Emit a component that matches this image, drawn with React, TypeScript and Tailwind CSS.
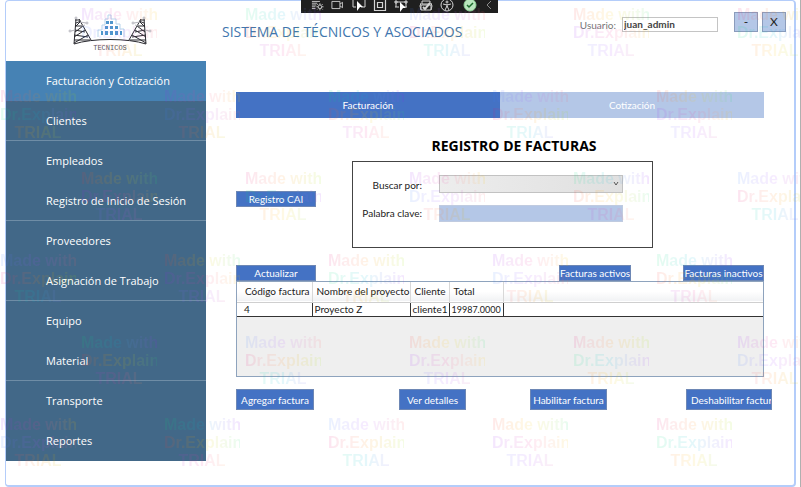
import { useState } from "react";
import type { ReactNode } from "react";

const menu = [
  "Facturación y Cotización",
  "Clientes",
  "Empleados",
  "Registro de Inicio de Sesión",
  "Proveedores",
  "Asignación de Trabajo",
  "Equipo",
  "Material",
  "Transporte",
  "Reportes",
];

const invoices = [
  { code: "4", project: "Proyecto Z", client: "cliente1", total: "19987.0000" },
];

const tints = [
  "from-purple-600 via-pink-500 to-yellow-400",
  "from-blue-500 via-purple-500 to-red-400",
  "from-pink-600 via-orange-400 to-lime-400",
  "from-green-400 via-cyan-500 to-purple-600",
  "from-red-500 via-yellow-400 to-green-400",
];

const markLines = ["Made with", "Dr.Explain", "TRIAL"];

function TrialMarks() {
  return (
    <div aria-hidden="true" className="pointer-events-none absolute inset-0 z-20 overflow-hidden opacity-10">
      {[0, 1, 2, 3, 4, 5].map((row) => (
        <div key={row} className={`flex h-[82px] pt-[6px] ${row % 2 === 0 ? "pl-[81px]" : "pl-0"}`}>
          {[0, 1, 2, 3, 4].map((col) => (
            <div
              key={col}
              className="w-[164px] shrink-0 font-['Liberation_Sans',Arial,sans-serif] text-base leading-[18px] font-bold"
            >
              <div className="w-[76px] text-center whitespace-nowrap">
                {markLines.map((line, i) => (
                  <div
                    key={line}
                    className={`bg-linear-to-r bg-clip-text text-transparent ${tints[(row * 2 + col * 3 + i) % 5]}`}
                  >
                    {line}
                  </div>
                ))}
              </div>
            </div>
          ))}
        </div>
      ))}
    </div>
  );
}

function Logo() {
  return (
    <svg viewBox="0 0 84 38" className="h-[38px] w-[84px]" fill="none" role="img" aria-label="Técnicos">
      <g stroke="#2a2a30" strokeWidth="1">
        <path d="M8 6 L6 31 M11 6 L23 27 M7 7 H12 M8 10 L13 8 M7 14 L12 9 M7 13 L15 13 M7 19 L15 13 M7 17 L17 19 M6 24 L17 17 M6 22 L20 24 M6 30 L20 22 M6 27 L22 27" />
        <path d="M76 6 L78 31 M73 6 L61 27 M77 7 H72 M76 10 L71 8 M77 14 L72 9 M77 13 L69 13 M77 19 L69 13 M77 17 L67 19 M78 24 L67 17 M78 22 L64 24 M78 30 L64 22 M78 27 L62 27" />
        <path d="M6 31 C24 25 60 25 78 31" />
      </g>
      <g stroke="#b4b4bb" strokeWidth="1">
        <path d="M12 9 L18 10 M3 18 L7 17 M14 13 L17 12 M72 9 L66 10 M81 18 L77 17 M70 13 L67 12" />
        <circle cx="2" cy="18" r="1" />
        <circle cx="19" cy="10" r="1" />
        <circle cx="82" cy="18" r="1" />
        <circle cx="65" cy="10" r="1" />
        <circle cx="8" cy="5" r="1" />
        <circle cx="76" cy="5" r="1" />
      </g>
      <path
        d="M30 24 V17 H34 V12 H37 V6 H40 V2 H43 V6 H46 V6 H48 V11 H52 V16 H56 V24"
        stroke="#b5d4ec"
        strokeWidth="1"
      />
      <g fill="#4f96cc">
        <path d="M38 8h3v3h-3z M42 8h3v3h-3z M37 13h3v3h-3z M42 13h3v3h-3z M47 13h3v3h-3z M33 18h2v4h-2z M37 18h3v4h-3z M42 18h3v4h-3z M47 18h3v4h-3z M52 18h2v4h-2z" />
      </g>
      <text x="42" y="37" textAnchor="middle" fill="#55555e" className="font-['Liberation_Mono',monospace] text-[7px]">
        TECNICOS
      </text>
    </svg>
  );
}

function ToolIcon({ children }: { children: ReactNode }) {
  return (
    <svg viewBox="0 0 14 14" className="size-[14px]" fill="none" stroke="#d4d4d4" strokeWidth="1">
      {children}
    </svg>
  );
}

function DebugBar() {
  return (
    <div className="absolute top-0 left-[301px] z-10 h-[13px] w-[197px] overflow-hidden bg-[#1f1f1f]">
      <div className="-mt-[2px] flex items-center gap-[7px] pl-[10px]">
        <ToolIcon>
          <path d="M1 3h9M1 5h6M1 7h5M1 9h4M1 11h4" />
          <circle cx="10" cy="9" r="2" />
          <path d="M10 5v2M10 11v2M6 9h2M12 9h2M7 6l1 1M12 11l1 1M13 6l-1 1M8 11l-1 1" />
        </ToolIcon>
        <ToolIcon>
          <path d="M1 3h9v8h-9z M10 6l3-2v6l-3-2" />
        </ToolIcon>
        <span className="ml-[2px] flex gap-[7px]">
          <ToolIcon>
            <path d="M1 2v7h3M9 9h4V2" />
            <path d="M5 3l6 6H8l-3 4z" fill="#fff" stroke="none" />
          </ToolIcon>
          <ToolIcon>
            <path d="M1.500 1.500h11v11h-11z M4.500 4.500h5v5h-5z" strokeWidth="1.200" />
          </ToolIcon>
          <ToolIcon>
            <path d="M1 4h12M1 9h4M10 9h3M1 3h2v2H1z M11 3h2v2h-2z M2 5v4M12 5v4" />
            <path d="M6 4l6 6H9l-3 4z" fill="#fff" stroke="none" />
          </ToolIcon>
        </span>
        <span className="ml-[4px] flex gap-[7px]">
          <ToolIcon>
            <path d="M3 3h8v3H3z M2 7h10v5H2z M2 5l-1 3 1 4M12 5l1 3-1 4" />
            <path d="M4 9l2 2 5-6" strokeWidth="2" />
          </ToolIcon>
          <ToolIcon>
            <circle cx="7" cy="7" r="6" />
            <circle cx="7" cy="4" r="1" />
            <path d="M3 6l4 1 4-1M7 6v3M7 8l-2 4M7 8l2 4" />
          </ToolIcon>
          <span className="ml-[2px]">
            <ToolIcon>
              <circle cx="7" cy="7" r="6" fill="#b9e6bd" stroke="#8fd096" />
              <path d="M4 7l2 2 4-4" stroke="#1c6b2c" strokeWidth="1.500" />
            </ToolIcon>
          </span>
          <ToolIcon>
            <path d="M7 3L3 7l4 4" stroke="#8a8a8a" />
          </ToolIcon>
        </span>
      </div>
    </div>
  );
}

function BlueButton({ className, children }: { className: string; children: ReactNode }) {
  return (
    <button
      type="button"
      className={`overflow-hidden border border-[#6d87b5] bg-[#4472c4] text-[10px] leading-[14px] whitespace-nowrap text-white ${className}`}
    >
      {children}
    </button>
  );
}

export default function App() {
  const [active, setActive] = useState(0);

  return (
    <div className="relative min-h-screen overflow-hidden border-r border-[#b0b0b0] bg-white pr-1 pl-[5px] font-[Lato,'Open_Sans',sans-serif] text-[10px] text-[#222]">
      <div className="flex min-h-screen flex-col rounded-sm border-2 border-t-1 border-l-1 border-[#b4cdfa]">
        <header className="flex h-[60px] items-start pr-2">
          <div className="w-[200px] shrink-0 pt-3 pl-[62px]">
            <Logo />
          </div>
          <h1 className="flex-1 pt-[19px] pl-4 font-['Open_Sans','Noto_Sans',sans-serif] text-sm leading-6 whitespace-nowrap text-[#3f76ae]">
            SISTEMA DE TÉCNICOS Y ASOCIADOS
          </h1>
          <div className="flex items-start pt-[11px]">
            <label htmlFor="usuario" className="pt-[5px] pr-[6px] leading-4 text-[#777]">
              Usuario:
            </label>
            <input
              id="usuario"
              defaultValue="juan_admin"
              className="mt-[5px] mr-4 h-[15px] w-24 border border-[#c4c4c4] bg-white px-px font-bold text-[#444]"
            />
            <button type="button" aria-label="Minimizar" className="mr-1 h-5 w-6 border border-[#8b9cbc] bg-[#b4c7e7] text-xs leading-[18px]">
              -
            </button>
            <button type="button" aria-label="Cerrar" className="h-5 w-6 border border-[#8b9cbc] bg-[#b4c7e7] text-xs leading-[18px]">
              X
            </button>
          </div>
        </header>

        <div className="flex flex-1 items-start">
          <nav className="w-[200px] shrink-0 bg-[#426888] font-['Open_Sans','Noto_Sans',sans-serif] text-[11px] text-white">
            {menu.map((item, i) => (
              <button
                key={item}
                type="button"
                onClick={() => setActive(i)}
                className={`block h-10 w-full border-b pt-[2px] pl-10 text-left whitespace-nowrap ${
                  i % 2 === 1 && i < 9 ? "border-[#6f8da6]" : "border-transparent"
                } ${i === active ? "bg-[#4682b4]" : ""}`}
              >
                {item}
              </button>
            ))}
          </nav>

          <main className="min-w-0 flex-1 px-[30px] pt-[31px]">
            <div className="flex h-[26px] text-white">
              <button type="button" className="flex-1 bg-[#4472c4]">
                Facturación
              </button>
              <button type="button" className="flex-1 bg-[#b4c7e7]">
                Cotización
              </button>
            </div>

            <h2 className="mt-[18px] pl-7 text-center font-['Open_Sans','Noto_Sans',sans-serif] text-sm leading-5 font-bold text-black">
              REGISTRO DE FACTURAS
            </h2>

            <div className="mt-[5px] flex items-start">
              <BlueButton className="mt-[30px] mr-9 h-4 w-20">Registro CAI</BlueButton>
              <div className="grid h-[87px] w-[301px] grid-cols-[69px_184px] content-start gap-x-[17px] gap-y-[10px] border border-[#444] pt-[13px]">
                <label htmlFor="buscar" className="text-right leading-[20px] whitespace-nowrap">
                  Buscar por:
                </label>
                <div className="relative">
                  <select
                    id="buscar"
                    className="block h-[18px] w-full appearance-none border border-[#c2c2c2] bg-linear-to-r from-[#ededed] to-[#e0e0e0]"
                  />
                  <svg viewBox="0 0 6 4" className="pointer-events-none absolute top-[7px] right-1 h-1 w-[6px]" fill="none" stroke="#555">
                    <path d="M1 0l2 3 2-3" />
                  </svg>
                </div>
                <label htmlFor="clave" className="text-right leading-[16px] whitespace-nowrap">
                  Palabra clave:
                </label>
                <input id="clave" className="h-[17px] border border-[#c0cbe0] bg-[#b4c7e7] px-1" />
              </div>
            </div>

            <div className="mt-[17px] flex">
              <BlueButton className="h-4 w-20">Actualizar</BlueButton>
              <BlueButton className="mr-[52px] ml-auto h-4 w-[72px]">Facturas activos</BlueButton>
              <BlueButton className="h-4 w-[81px]">Facturas inactivos</BlueButton>
            </div>

            <div className="h-24 border border-[#8ea3bd] bg-[#efefef]">
              <table className="w-full table-fixed border-collapse text-left whitespace-nowrap">
                <colgroup>
                  <col className="w-1" />
                  <col className="w-[71px]" />
                  <col className="w-[98px]" />
                  <col className="w-[39px]" />
                  <col className="w-[54px]" />
                  <col />
                </colgroup>
                <thead>
                  <tr className="h-5 border-b border-[#cfcfcf] bg-linear-to-b from-white from-50% to-[#f1f2f4]">
                    <td />
                    <th className="border-r border-[#d8d8d8] pl-1 font-normal">Código factura</th>
                    <th className="border-r border-[#d8d8d8] pl-1 font-normal">Nombre del proyecto</th>
                    <th className="border-r border-[#d8d8d8] pl-1 font-normal">Cliente</th>
                    <th className="border-r border-[#d8d8d8] pl-1 font-normal">Total</th>
                    <td />
                  </tr>
                </thead>
                <tbody>
                  {invoices.map((row) => (
                    <tr key={row.code} className="h-[14px] border-b border-[#333] bg-white leading-[13px]">
                      <td />
                      <td className="border-r border-[#333] pl-[3px]">{row.code}</td>
                      <td className="border-r border-[#333] pl-[2px]">{row.project}</td>
                      <td className="border-r border-[#333] pl-[2px]">{row.client}</td>
                      <td className="border-r border-[#333] pl-[2px] text-[9px]">{row.total}</td>
                      <td />
                    </tr>
                  ))}
                </tbody>
              </table>
            </div>

            <div className="mt-3 -mr-2 grid grid-cols-[163fr_131fr_156fr_86fr]">
              <BlueButton className="h-[21px] w-[78px]">Agregar factura</BlueButton>
              <BlueButton className="h-[21px] w-[67px]">Ver detalles</BlueButton>
              <BlueButton className="h-[21px] w-[77px]">Habilitar factura</BlueButton>
              <BlueButton className="h-[21px] w-[86px] pl-1 text-left">Deshabilitar factura</BlueButton>
            </div>
          </main>
        </div>
      </div>
      <DebugBar />
      <TrialMarks />
    </div>
  );
}
